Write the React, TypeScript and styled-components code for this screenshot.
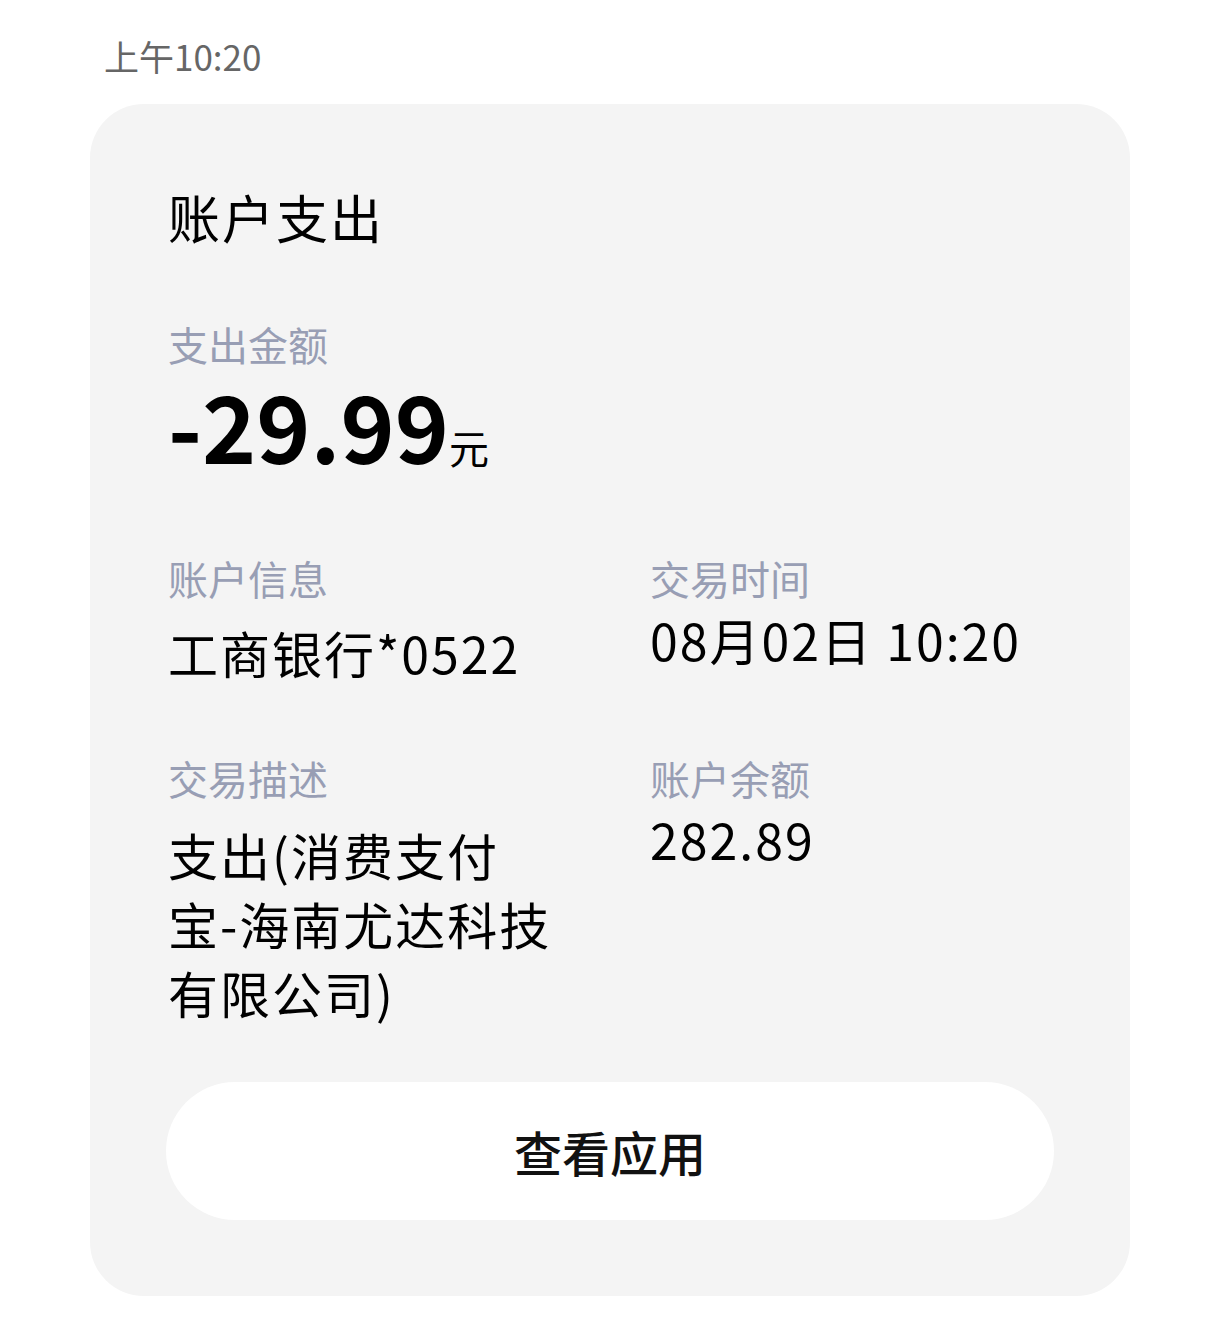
import React from "react";
import styled, { createGlobalStyle } from "styled-components";

const GlobalStyle = createGlobalStyle`
  html, body {
    margin: 0;
    padding: 0;
    background: #ffffff;
  }
  body {
    font-family: "Noto Sans CJK SC", "Noto Sans", sans-serif;
    color: #000;
  }
`;

const Page = styled.div`
  width: 1220px;
  padding: 0 90px 48px 90px;
  box-sizing: border-box;
`;

const Timestamp = styled.div`
  padding: 38px 0 0 14px;
  height: 104px;
  box-sizing: border-box;
  font-size: 35px;
  line-height: 35px;
  color: #666666;
`;

const Card = styled.section`
  background: #f4f4f4;
  border-radius: 54px;
  padding: 87px 76px 76px 76px;
  display: flex;
  flex-direction: column;
`;

const Title = styled.h1`
  margin: 0 0 0 2px;
  font-size: 52px;
  line-height: 52px;
  font-weight: 400;
  letter-spacing: 2px;
  color: #000;
`;

const Label = styled.div<{ $top?: number }>`
  margin: ${(p) => p.$top ?? 0}px 0 0 2px;
  font-size: 40px;
  line-height: 40px;
  color: #989eb4;
`;

const Amount = styled.div`
  margin: 14px 0 0 2px;
  display: flex;
  align-items: baseline;
  height: 92px;
`;

const AmountNumber = styled.span`
  font-size: 92px;
  line-height: 92px;
  font-weight: 700;
  color: #000;
`;

const Unit = styled.span`
  margin-left: 0;
  font-size: 40px;
  line-height: 40px;
  font-weight: 400;
`;

const Grid = styled.div`
  margin-top: 88px;
  display: grid;
  grid-template-columns: 392px 1fr;
  column-gap: 90px;
  row-gap: 71px;
`;

const Field = styled.div`
  display: flex;
  flex-direction: column;
`;

const Value = styled.div<{ $gap: number }>`
  margin: ${(p) => p.$gap}px 0 0 2px;
  font-size: 50px;
  line-height: 69px;
  letter-spacing: 2px;
  color: #000;
`;

const ActionButton = styled.button`
  margin-top: 55px;
  height: 138px;
  width: 100%;
  border: none;
  border-radius: 69px;
  background: #ffffff;
  font-family: inherit;
  font-size: 48px;
  font-weight: 500;
  color: #111;
  cursor: pointer;
`;

type Item = { label: string; value: string; gap: number };

const items: Item[] = [
  { label: "账户信息", value: "工商银行*0522", gap: 20 },
  { label: "交易时间", value: "08月02日 10:20", gap: 7 },
  { label: "交易描述", value: "支出(消费支付宝-海南尤达科技有限公司)", gap: 22 },
  { label: "账户余额", value: "282.89", gap: 6 },
];

export default function App() {
  return (
    <>
      <GlobalStyle />
      <Page>
        <Timestamp>上午10:20</Timestamp>
        <Card>
          <Title>账户支出</Title>
          <Label $top={81}>支出金额</Label>
          <Amount>
            <AmountNumber>-29.99</AmountNumber>
            <Unit>元</Unit>
          </Amount>
          <Grid>
            {items.map((it) => (
              <Field key={it.label}>
                <Label>{it.label}</Label>
                <Value $gap={it.gap}>{it.value}</Value>
              </Field>
            ))}
          </Grid>
          <ActionButton>查看应用</ActionButton>
        </Card>
      </Page>
    </>
  );
}
